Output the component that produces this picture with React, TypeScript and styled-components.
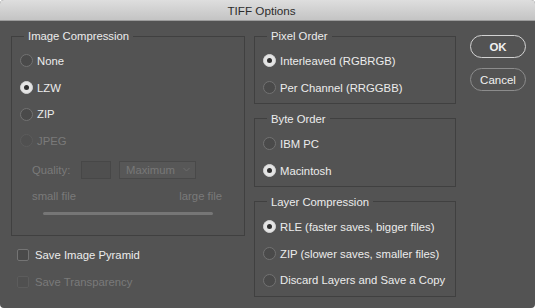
import styled, { createGlobalStyle } from "styled-components";

const GlobalStyle = createGlobalStyle`
  html, body {
    margin: 0;
    padding: 0;
    background: #ffffff;
  }
  #root {
    width: 535px;
    height: 308px;
  }
`;

const Window = styled.div`
  width: 535px;
  height: 308px;
  display: flex;
  flex-direction: column;
  background: #535353;
  border-radius: 4px;
  overflow: hidden;
  font-family: "Liberation Sans", Arial, sans-serif;
  font-size: 11.3px;
  color: #e8e8e8;
`;

const TitleBar = styled.div`
  height: 20px;
  flex: none;
  display: flex;
  align-items: center;
  justify-content: center;
  padding-right: 12px;
  background: linear-gradient(#dedede, #c4c4c4);
  border-bottom: 1px solid #9c9c9c;
  color: #2c2c2c;
  font-size: 11.7px;
`;

const Body = styled.div`
  flex: 1;
  display: flex;
  padding: 8px 9px 0 11px;
`;

const Column = styled.div<{ $width: number; $gap?: number }>`
  width: ${(p) => p.$width}px;
  flex: none;
  display: flex;
  flex-direction: column;
  gap: ${(p) => p.$gap ?? 0}px;
`;

const Group = styled.fieldset`
  margin: 0;
  padding: 0;
  min-width: 0;
  border: 1px solid #404040;
`;

const Legend = styled.legend`
  margin-left: 12px;
  padding: 0 4px;
  line-height: 14px;
  color: #ececec;
`;

const Rows = styled.div<{ $bottom?: number }>`
  display: flex;
  flex-direction: column;
  padding: 4.67px 0 ${(p) => p.$bottom ?? 2}px 8px;
`;

const Row = styled.label<{ $disabled?: boolean }>`
  height: 26.67px;
  display: flex;
  align-items: center;
  gap: 4px;
  color: ${(p) => (p.$disabled ? "#7a7a7a" : "#ececec")};
  white-space: nowrap;
`;

const Radio = styled.span<{ $checked?: boolean; $disabled?: boolean }>`
  width: 13px;
  height: 13px;
  box-sizing: border-box;
  border-radius: 50%;
  flex: none;
  display: flex;
  align-items: center;
  justify-content: center;
  border: 1px solid
    ${(p) => (p.$checked ? "#d4d4d4" : p.$disabled ? "#5c5c5c" : "#727272")};
  background: ${(p) =>
    p.$checked ? "#e4e4e4" : p.$disabled ? "#505050" : "#4a4a4a"};

  &::after {
    content: "";
    display: ${(p) => (p.$checked ? "block" : "none")};
    width: 5px;
    height: 5px;
    border-radius: 50%;
    background: #2e2e2e;
  }
`;

const Checkbox = styled.span<{ $disabled?: boolean }>`
  width: 12px;
  height: 12px;
  box-sizing: border-box;
  flex: none;
  border-radius: 2px;
  border: 1px solid ${(p) => (p.$disabled ? "#5c5c5c" : "#747474")};
  background: ${(p) => (p.$disabled ? "#505050" : "#4a4a4a")};
`;

const CheckRows = styled.div`
  display: flex;
  flex-direction: column;
  padding: 5.67px 0 0 6px;

  ${Row} {
    gap: 6px;
  }
`;

const QualityRow = styled.div`
  display: flex;
  align-items: center;
  height: 18px;
  margin-top: 6.67px;
  padding-left: 20px;
  color: #7a7a7a;
`;

const QualityLabel = styled.span`
  width: 49px;
`;

const QualityInput = styled.span`
  width: 30px;
  height: 18px;
  box-sizing: border-box;
  border: 1px solid #474747;
  background: #4f4f4f;
`;

const Select = styled.span`
  width: 77px;
  height: 18px;
  box-sizing: border-box;
  margin-left: 8px;
  padding: 0 5px 0 6px;
  display: flex;
  align-items: center;
  justify-content: space-between;
  border: 1px solid #494949;
  background: #575757;
  color: #787878;
`;

const SizeLabels = styled.div`
  display: flex;
  justify-content: space-between;
  line-height: 14px;
  margin-top: 10px;
  padding: 0 22px 0 20px;
  color: #7a7a7a;
`;

const Track = styled.div`
  height: 3px;
  margin: 9.5px 31px 20px;
  border-radius: 2px;
  background: #767676;
`;

const Button = styled.button<{ $primary?: boolean }>`
  width: 56px;
  height: 23px;
  padding: 0;
  border-radius: 12px;
  background: #535353;
  border: ${(p) => (p.$primary ? "1.5px solid #d2d2d2" : "1px solid #8c8c8c")};
  color: #f0f0f0;
  font-family: "Liberation Sans", Arial, sans-serif;
  font-size: 11.5px;
  font-weight: ${(p) => (p.$primary ? 700 : 400)};
`;

const Buttons = styled(Column)`
  margin-left: 14px;
  padding-top: 6px;
`;

const Chevron = () => (
  <svg width="7" height="5" viewBox="0 0 7 5">
    <polyline points="0.5,1 3.5,4 6.5,1" fill="none" stroke="#6c6c6c" strokeWidth="1" />
  </svg>
);

function RadioRow({ label, checked, disabled }: { label: string; checked?: boolean; disabled?: boolean }) {
  return (
    <Row $disabled={disabled}>
      <Radio $checked={checked} $disabled={disabled} />
      {label}
    </Row>
  );
}

export default function App() {
  return (
    <>
      <GlobalStyle />
      <Window>
        <TitleBar>TIFF Options</TitleBar>
        <Body>
          <Column $width={234}>
            <Group>
              <Legend>Image Compression</Legend>
              <Rows $bottom={0}>
                <RadioRow label="None" />
                <RadioRow label="LZW" checked />
                <RadioRow label="ZIP" />
                <RadioRow label="JPEG" disabled />
              </Rows>
              <QualityRow>
                <QualityLabel>Quality:</QualityLabel>
                <QualityInput />
                <Select>
                  Maximum
                  <Chevron />
                </Select>
              </QualityRow>
              <SizeLabels>
                <span>small file</span>
                <span>large file</span>
              </SizeLabels>
              <Track />
            </Group>
            <CheckRows>
              <Row>
                <Checkbox />
                Save Image Pyramid
              </Row>
              <Row $disabled>
                <Checkbox $disabled />
                Save Transparency
              </Row>
            </CheckRows>
          </Column>

          <Column $width={202} $gap={8} style={{ marginLeft: 9 }}>
            <Group>
              <Legend>Pixel Order</Legend>
              <Rows>
                <RadioRow label="Interleaved (RGBRGB)" checked />
                <RadioRow label="Per Channel (RRGGBB)" />
              </Rows>
            </Group>
            <Group>
              <Legend>Byte Order</Legend>
              <Rows>
                <RadioRow label="IBM PC" />
                <RadioRow label="Macintosh" checked />
              </Rows>
            </Group>
            <Group>
              <Legend>Layer Compression</Legend>
              <Rows>
                <RadioRow label="RLE (faster saves, bigger files)" checked />
                <RadioRow label="ZIP (slower saves, smaller files)" />
                <RadioRow label="Discard Layers and Save a Copy" />
              </Rows>
            </Group>
          </Column>

          <Buttons $width={56} $gap={10}>
            <Button $primary>OK</Button>
            <Button>Cancel</Button>
          </Buttons>
        </Body>
      </Window>
    </>
  );
}
